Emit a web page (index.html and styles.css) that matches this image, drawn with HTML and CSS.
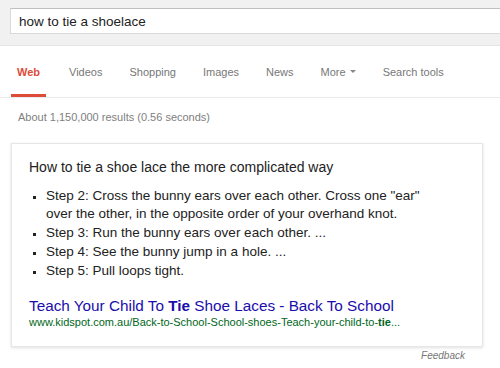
FILE: index.html
```html
<!DOCTYPE html>
<html lang="en">
<head>
  <meta charset="UTF-8" />
  <title>how to tie a shoelace - Google Search</title>
  <link rel="stylesheet" href="styles.css">
</head>
<body>

  <!-- Search bar -->
  <div class="searchbar">
    <div class="searchbox">how to tie a shoelace</div>
  </div>

  <!-- Tabs -->
  <nav class="tabs">
    <a class="tab active" href="#">Web</a>
    <a class="tab" href="#">Videos</a>
    <a class="tab" href="#">Shopping</a>
    <a class="tab" href="#">Images</a>
    <a class="tab" href="#">News</a>
    <a class="tab" href="#">More<span class="caret"></span></a>
    <a class="tab" href="#">Search tools</a>
  </nav>

  <div class="stats">About 1,150,000 results (0.56 seconds)</div>

  <!-- Answer card -->
  <div class="card">
    <div class="card-title">How to tie a shoe lace the more complicated way</div>
    <ul class="steps">
      <li>Step 2: Cross the bunny ears over each other. Cross one "ear" over the other, in the opposite order of your overhand knot.</li>
      <li>Step 3: Run the bunny ears over each other. ...</li>
      <li>Step 4: See the bunny jump in a hole. ...</li>
      <li>Step 5: Pull loops tight.</li>
    </ul>
    <a class="result-link" href="#">Teach Your Child To <b>Tie</b> Shoe Laces - Back To School</a>
    <div class="result-url">www.kidspot.com.au/Back-to-School-School-shoes-Teach-your-child-to-<b>tie</b>...</div>
  </div>

  <div class="feedback">Feedback</div>

</body>
</html>
```
FILE: styles.css
```css
body {
  margin: 0;
  font-family: Arial, "Liberation Sans", sans-serif;
  background: #fff;
  color: #222;
}

.searchbar {
  height: 46px;
  padding-top: 8px;
  background: #f1f1f1;
  border-bottom: 1px solid #e5e5e5;
  box-sizing: border-box;
}

.searchbox {
  margin-left: 10px;
  height: 26px;
  border: 1px solid #d9d9d9;
  border-right: none;
  border-top-color: #c0c0c0;
  background: #fff;
  box-sizing: border-box;
  padding: 4px 0 0 8px;
  font-size: 13.5px;
  line-height: 18px;
  color: #222;
}

.tabs {
  display: flex;
  height: 51px;
  padding-left: 11px;
  border-bottom: 1px solid #ebebeb;
}

.tab {
  display: flex;
  align-items: center;
  padding: 3px 6px 0 6px;
  margin-right: 15px;
  height: 45px;
  font-size: 11px;
  color: #777;
  text-decoration: none;
  border-bottom: 3px solid transparent;
}

.tab:nth-child(2) {
  padding-left: 8px;
}

.tab.active {
  color: #dd4b39;
  font-weight: bold;
  border-bottom-color: #dd4b39;
}

.caret {
  display: inline-block;
  margin-left: 4px;
  border-left: 3px solid transparent;
  border-right: 3px solid transparent;
  border-top: 3px solid #888;
}

.stats {
  padding: 13px 0 0 18px;
  font-size: 11px;
  color: #808080;
  height: 32px;
}

.card {
  margin-left: 11px;
  width: 472px;
  box-sizing: border-box;
  border: 1px solid #e6e6e6;
  box-shadow: 0 1px 3px rgba(0,0,0,0.12);
  padding: 14px 17px 17px 17px;
}

.card-title {
  font-size: 14px;
  color: #222;
  line-height: 18px;
}

.steps {
  margin: 11px 0 0 0;
  padding: 0 26px 0 17px;
  list-style-type: square;
  font-size: 13.5px;
  line-height: 18px;
  color: #222;
}

.steps li {
  margin-bottom: 1px;
}

.steps li::marker {
  font-size: 11px;
}

.result-link {
  display: block;
  margin-top: 17px;
  font-size: 15.3px;
  line-height: 18px;
  color: #1a0dab;
  text-decoration: none;
}

.result-url {
  font-size: 11px;
  line-height: 14px;
  color: #006621;
  white-space: nowrap;
}

.feedback {
  width: 465px;
  text-align: right;
  margin-top: 3px;
  font-size: 10px;
  font-style: italic;
  color: #777;
}
```
